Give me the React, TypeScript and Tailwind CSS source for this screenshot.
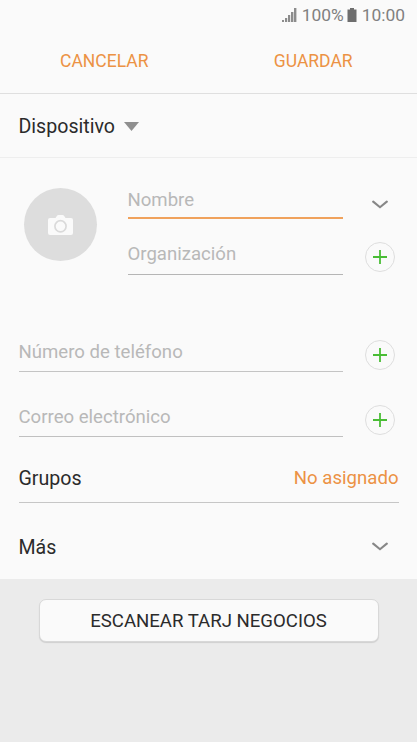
import React from 'react';

const PlusButton: React.FC = () => (
    <button type="button" className="flex h-[30px] w-[30px] shrink-0 items-center justify-center rounded-full border border-[#dedede]">
        <svg width="14" height="14" viewBox="0 0 14 14" className="block">
            <path d="M7 0v14M0 7h14" stroke="#49bd35" strokeWidth="1.8" fill="none" />
        </svg>
    </button>
);

const Chevron: React.FC = () => (
    <svg width="16" height="9" viewBox="0 0 16 9" className="block shrink-0">
        <path d="M1.2 1.6L8 7.2l6.8-5.6" stroke="#878787" strokeWidth="2.1" strokeLinecap="round" fill="none" />
    </svg>
);

interface FieldProps {
    label: string;
    className: string;
}

const Field: React.FC<FieldProps> = ({ label, className }) => (
    <div className={`flex items-end text-[18.6px] leading-[22px] text-[#b8b8b8] ${className}`}>
        <span className="whitespace-nowrap">{label}</span>
    </div>
);

const App: React.FC = () => {
    return (
        <div className="flex h-[742px] w-[417px] flex-col overflow-hidden bg-[#ebebeb] font-['Roboto',sans-serif] text-[#2b2b2b]">
            <div className="h-[578.5px] shrink-0 bg-[#fafafa]">
                <div className="flex h-[30px] items-center justify-end pr-3 text-[17.4px] leading-5 text-[#808080]">
                    <svg width="15" height="14" viewBox="0 0 15 14" className="mr-[5px] block" fill="#8c8c8c">
                        <path d="M0 12h2v2H0zM3 10h2.2v4H3zM6 7h2.2v7H6zM9 4h2.4v10H9zM12 0h2.400v14H12z" />
                    </svg>
                    <span>100%</span>
                    <svg width="10" height="14" viewBox="0 0 10 14" className="mr-[5px] ml-[3px] block" fill="#6e6e6e">
                        <path d="M3 0h4v1.5h2.5V14h-9V1.5H3z" />
                    </svg>
                    <span>10:00</span>
                </div>

                <div className="grid h-[64px] grid-cols-2 items-center border-b border-[#dfdfdf] pb-[2px] text-[17.5px] leading-[22px] text-[#ec9244]">
                    <button type="button">CANCELAR</button>
                    <button type="button" className="pl-px">GUARDAR</button>
                </div>

                <div className="flex h-[64px] items-center border-b border-[#eeeeee] pt-[2px] pl-[18.5px] text-[19.6px]">
                    <span>Dispositivo</span>
                    <svg width="15" height="9" viewBox="0 0 15 9" className="ml-[9px] block">
                        <path d="M0 0h15L7.5 9z" fill="#8f8f8f" />
                    </svg>
                </div>

                <div className="flex h-[117px] pl-6">
                    <div className="mt-[30px] flex h-[73px] w-[73px] shrink-0 items-center justify-center rounded-full bg-[#dddddd]">
                        <svg width="25" height="20" viewBox="0 0 25 20" className="block">
                            <path d="M2 3h5.5L9 .8Q9.5 0 10.5 0h4q1 0 1.5.8L17.5 3H23q2 0 2 2v13q0 2-2 2H2q-2 0-2-2V5q0-2 2-2z" fill="#fafafa" />
                            <circle cx="12.5" cy="11.3" r="5.6" fill="none" stroke="#dadada" strokeWidth="1.7" />
                        </svg>
                    </div>
                    <div className="ml-[30.5px] w-[215.5px] shrink-0">
                        <Field label="Nombre" className="h-[61px] border-b-2 border-[#f0a25c] pb-[6px]" />
                        <Field label="Organización" className="h-14 border-b border-[#b5b5b5] pb-[9px]" />
                    </div>
                    <div className="ml-[22px] flex w-[30px] shrink-0 flex-col items-center">
                        <div className="mt-[42px]">
                            <Chevron />
                        </div>
                        <div className="mt-[33px]">
                            <PlusButton />
                        </div>
                    </div>
                </div>

                <div className="mt-[57px] flex h-[41px] items-start pl-[18.5px]">
                    <Field label="Número de teléfono" className="h-10 w-[324.5px] border-b border-[#c4c4c4] pb-[8px]" />
                    <div className="mt-[8px] ml-[22px]">
                        <PlusButton />
                    </div>
                </div>

                <div className="mt-6 flex h-[41px] items-start pl-[18.5px]">
                    <Field label="Correo electrónico" className="h-10 w-[324.5px] border-b border-[#c0c0c0] pb-[8px]" />
                    <div className="mt-[8px] ml-[22px]">
                        <PlusButton />
                    </div>
                </div>

                <div className="mx-[18.5px] flex h-[65px] items-center justify-between border-b border-[#c6c6c6] pt-[18px]">
                    <span className="text-[19.6px]">Grupos</span>
                    <span className="text-[18.6px] text-[#ec9244]">No asignado</span>
                </div>

                <div className="flex h-[75px] items-center justify-between pr-[29px] pl-[18.5px] pt-[12px]">
                    <span className="pt-[2px] text-[19.6px]">Más</span>
                    <Chevron />
                </div>
            </div>

            <button type="button" className="mx-auto mt-[20.5px] h-[43px] w-[340px] rounded-[7px] border border-[#d8d8d8] bg-[#fafafa] pt-[2px] text-[18.6px] shadow-[0_1px_1px_rgba(0,0,0,0.12)]">
                ESCANEAR TARJ NEGOCIOS
            </button>
        </div>
    );
};

export default App;
